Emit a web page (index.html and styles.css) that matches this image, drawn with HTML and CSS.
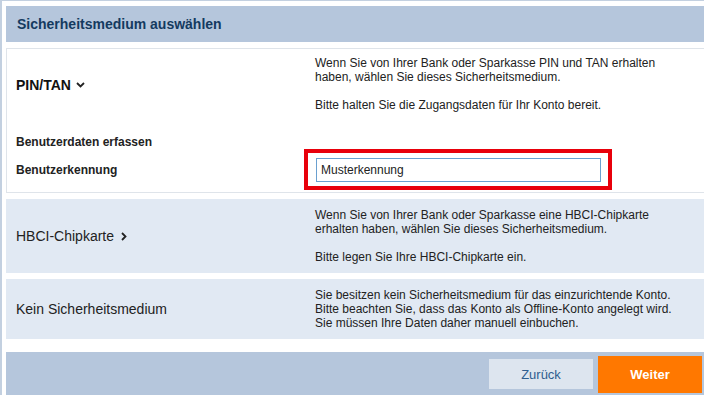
FILE: index.html
```html
<!DOCTYPE html>
<html lang="de">
<head>
<meta charset="utf-8">
<title>Sicherheitsmedium auswählen</title>
<link rel="stylesheet" href="styles.css">
</head>
<body>
<div class="frame">
  <div class="header">Sicherheitsmedium auswählen</div>

  <section class="option option-active">
    <div class="row">
      <div class="title title-bold">PIN/TAN
        <svg class="chev" width="9" height="6" viewBox="0 0 9 6"><path d="M1 1 L4.5 4.5 L8 1" fill="none" stroke="#222" stroke-width="1.8"/></svg>
      </div>
      <div class="desc">
        <p>Wenn Sie von Ihrer Bank oder Sparkasse PIN und TAN erhalten<br>haben, wählen Sie dieses Sicherheitsmedium.</p>
        <p>Bitte halten Sie die Zugangsdaten für Ihr Konto bereit.</p>
      </div>
    </div>
    <div class="subhead">Benutzerdaten erfassen</div>
    <div class="row field-row">
      <label class="field-label" for="uid">Benutzerkennung</label>
      <div class="highlight">
        <input id="uid" class="field-input" type="text" value="Musterkennung">
      </div>
    </div>
  </section>

  <section class="option">
    <div class="row">
      <div class="title">HBCI-Chipkarte
        <svg class="chev chev-right" width="6" height="9" viewBox="0 0 6 9"><path d="M1 1 L4.5 4.5 L1 8" fill="none" stroke="#222" stroke-width="1.8"/></svg>
      </div>
      <div class="desc">
        <p>Wenn Sie von Ihrer Bank oder Sparkasse eine HBCI-Chipkarte<br>erhalten haben, wählen Sie dieses Sicherheitsmedium.</p>
        <p>Bitte legen Sie Ihre HBCI-Chipkarte ein.</p>
      </div>
    </div>
  </section>

  <section class="option option-last">
    <div class="row">
      <div class="title">Kein Sicherheitsmedium</div>
      <div class="desc">
        <p>Sie besitzen kein Sicherheitsmedium für das einzurichtende Konto.<br>Bitte beachten Sie, dass das Konto als Offline-Konto angelegt wird.<br>Sie müssen Ihre Daten daher manuell einbuchen.</p>
      </div>
    </div>
  </section>

  <div class="footer">
    <button class="btn btn-back">Zurück</button>
    <button class="btn btn-next">Weiter</button>
  </div>
</div>
</body>
</html>
```

FILE: styles.css
```css
html, body {
  margin: 0;
  padding: 0;
  background: #ffffff;
  overflow: hidden;
}

body {
  font-family: "Liberation Sans", Arial, sans-serif;
  color: #222222;
  width: 704px;
  height: 395px;
}

.frame {
  border-left: 2px solid #c3d0e0;
  border-top: 1px solid #c3d0e0;
  padding: 5px 0 0 4px;
  height: 395px;
  box-sizing: border-box;
  display: flex;
  flex-direction: column;
}

.header {
  background: #b5c6dc;
  height: 36px;
  box-sizing: border-box;
  padding: 0 11px;
  display: flex;
  align-items: center;
  font-size: 14px;
  font-weight: bold;
  color: #143a60;
  flex-shrink: 0;
}

.option {
  background: #e1e9f3;
  margin-top: 6px;
  padding: 9px 10px 9px 10px;
  flex-shrink: 0;
}

.option-last {
  padding: 9px 10px 9px 10px;
}

.option-active {
  background: #ffffff;
  border: 1px solid #dfe4ea;
  border-right: none;
  margin-top: 6px;
  padding: 7px 10px 2px 9px;
}

.row {
  display: grid;
  grid-template-columns: 299px 1fr;
  align-items: center;
}

.title {
  font-size: 14px;
  display: flex;
  align-items: center;
  gap: 5px;
}

.title-bold {
  font-weight: bold;
  color: #111111;
  padding-top: 2px;
}

.chev {
  display: block;
}

.chev-right {
  margin-left: 2px;
}

.desc {
  font-size: 12px;
  line-height: 14px;
  color: #222222;
}

.desc p {
  margin: 0;
}

.desc p + p {
  margin-top: 14px;
}

.subhead {
  font-size: 12px;
  font-weight: bold;
  line-height: 14px;
  margin-top: 23px;
}

.field-row {
  grid-template-columns: 288px 308px;
}

.field-label {
  font-size: 12px;
  font-weight: bold;
  line-height: 14px;
}

.highlight {
  border: 4px solid #e8000b;
  padding: 5px 7px 4px 8px;
}

.field-input {
  display: block;
  width: 285px;
  height: 24px;
  box-sizing: border-box;
  border: 1px solid #6aa0d0;
  padding: 0 4px;
  font-family: "Liberation Sans", Arial, sans-serif;
  font-size: 12px;
  color: #222222;
  outline: none;
  background: #ffffff;
}

.footer {
  margin-top: 13px;
  background: #b5c6dc;
  flex: 1;
  display: flex;
  justify-content: flex-end;
  align-items: flex-start;
  gap: 5px;
  padding: 0 2px 0 0;
}

.btn {
  font-family: "Liberation Sans", Arial, sans-serif;
  font-size: 13px;
  border: none;
  cursor: pointer;
}

.btn-back {
  background: #dde5ef;
  color: #2f5e8f;
  width: 104px;
  height: 30px;
  margin-top: 7px;
}

.btn-next {
  background: #ff7800;
  color: #ffffff;
  font-weight: bold;
  width: 104px;
  height: 37px;
  margin-top: 4px;
}
```
